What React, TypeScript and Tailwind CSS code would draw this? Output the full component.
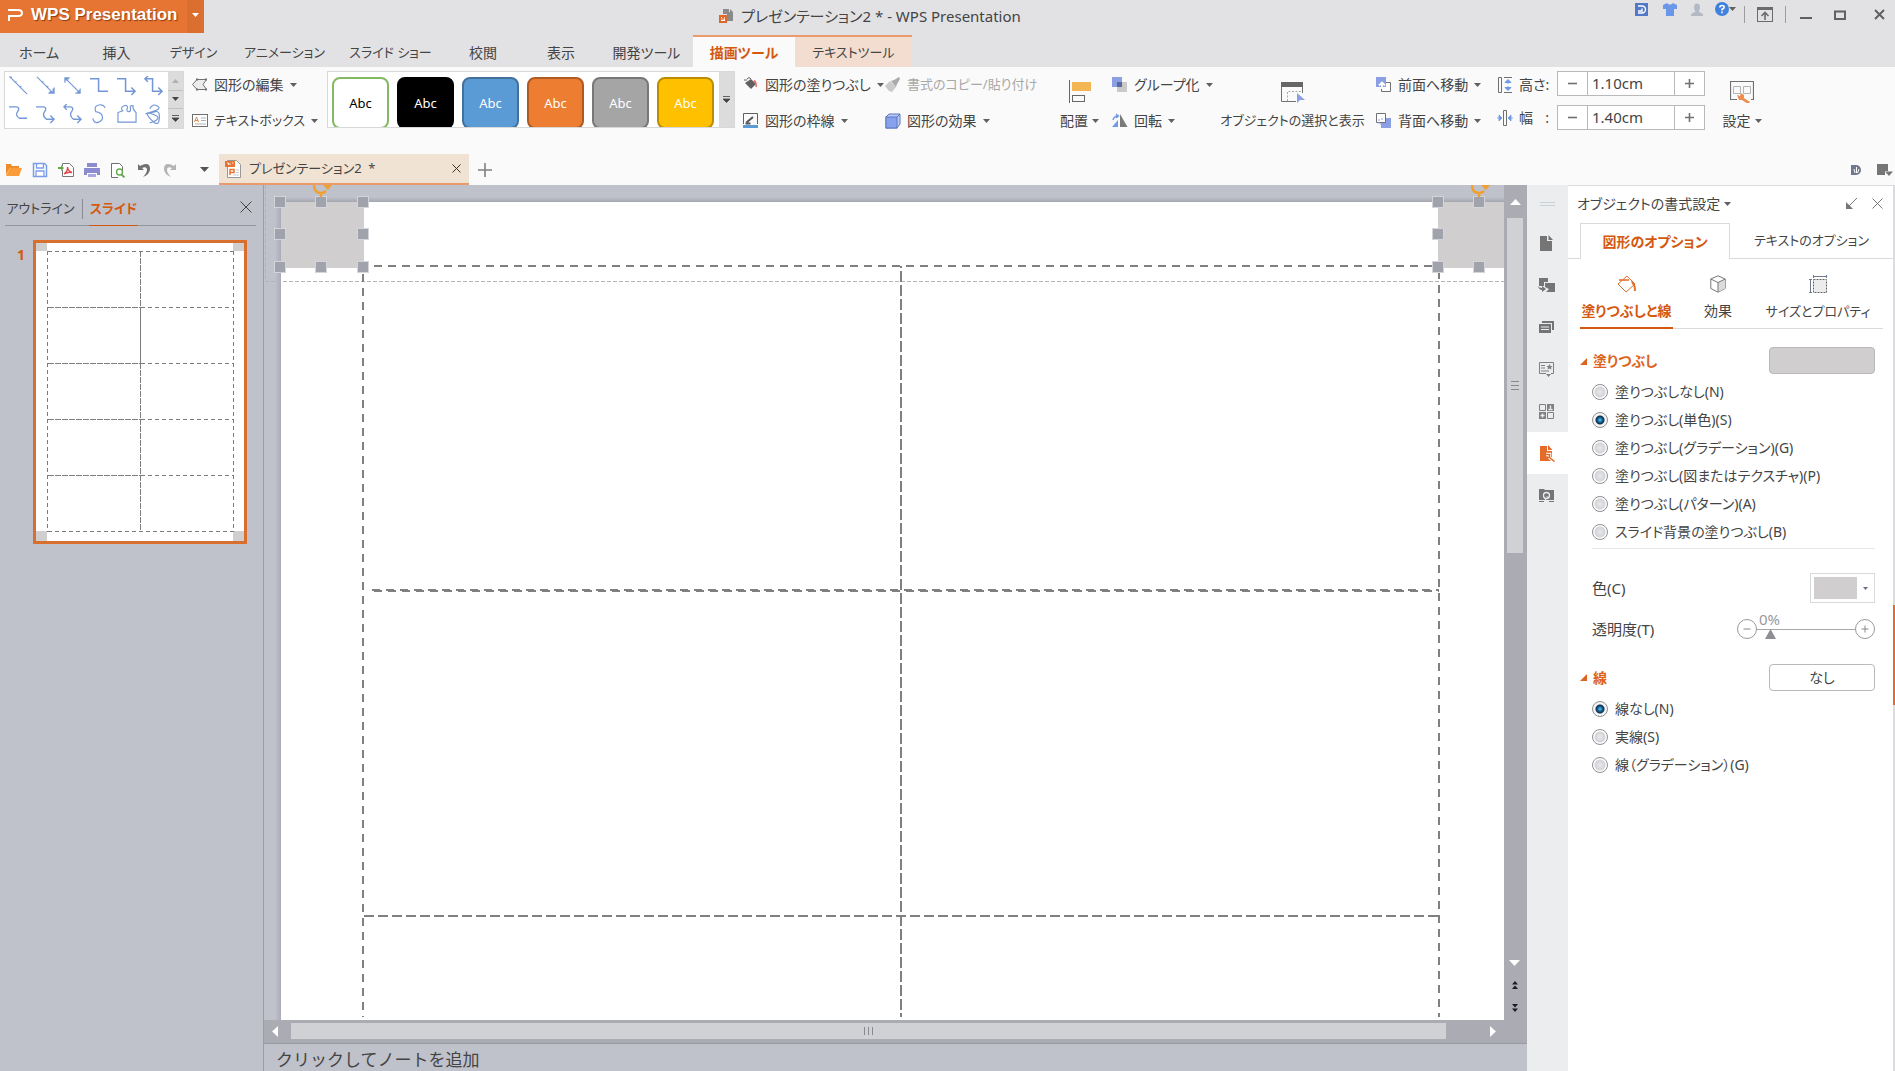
import type { ReactNode } from "react";

const menuTabs = [
  { label: "ホーム", style: "w-[78px] text-sm" },
  { label: "挿入", style: "w-[77px] text-sm" },
  { label: "デザイン", style: "w-[77px] text-[13px]" },
  { label: "アニメーション", style: "w-[105px] text-[13px]" },
  { label: "スライド ショー", style: "w-[107px] text-[13px]" },
  { label: "校閲", style: "w-[78px] text-sm" },
  { label: "表示", style: "w-[78px] text-sm" },
  { label: "開発ツール", style: "w-[93px] text-sm" },
];

const shapeStyles = [
  "bg-white text-black border-[#82b961]",
  "bg-black text-white border-black",
  "bg-[#5b9bd5] text-white border-[#41719c]",
  "bg-[#ed7d31] text-white border-[#ae5a21]",
  "bg-[#a5a5a5] text-white border-[#787878]",
  "bg-[#ffc000] text-white border-[#bc8c00]",
];

const fillOptions = [
  "塗りつぶしなし(N)",
  "塗りつぶし(単色)(S)",
  "塗りつぶし(グラデーション)(G)",
  "塗りつぶし(図またはテクスチャ)(P)",
  "塗りつぶし(パターン)(A)",
  "スライド背景の塗りつぶし(B)",
];

const lineOptions = ["線なし(N)", "実線(S)", "線（グラデーション）(G)"];

const blue = "#7397d6";

function Svg({ w = 16, h = 16, children }: { w?: number; h?: number; children: ReactNode }) {
  return (
    <svg width={w} height={h} viewBox={`0 0 ${w} ${h}`} fill="none" className="shrink-0" aria-hidden="true">
      {children}
    </svg>
  );
}

function Caret({ color = "#606060" }: { color?: string }) {
  return (
    <Svg w={7} h={4}>
      <path d="M0 0h7L3.5 4z" fill={color} />
    </Svg>
  );
}

/* ---------- title bar ---------- */

function TitleBar() {
  return (
    <header className="flex h-[35px] items-start">
      <div className="flex h-[33px] w-[204px] shrink-0 text-white">
        <button className="flex flex-1 items-center gap-2 bg-[#e67433] pl-2 pb-1 font-['Liberation_Sans',sans-serif] text-[17px] font-bold whitespace-nowrap [text-shadow:1px_1px_1px_#8a3c10]">
          <Svg w={15} h={14}>
            <path d="M0 2h10q4 0 4 3t-4 3H1v5" stroke="#fff" strokeWidth="2" />
          </Svg>
          WPS Presentation
        </button>
        <button aria-label="メニュー" className="flex w-[17px] items-center justify-center bg-[#db6f30] pb-1">
          <Caret color="#fff" />
        </button>
      </div>
      <div className="flex flex-1 items-center justify-center gap-1.5 pt-1">
        <Svg w={16} h={16}>
          <path d="M4 1h6v3h4v9H8V6H4z" fill="#8a8a8a" />
          <path d="M11 1l3 3h-3z" fill="#8a8a8a" />
          <rect x="1" y="8" width="6" height="6" fill="#fff" stroke="#e0692a" strokeWidth="2" />
          <path d="M3 12V9.500h2v1.500H3" stroke="#e0692a" />
        </Svg>
        <h1 className="text-[15px] leading-6">プレゼンテーション2 * - WPS Presentation</h1>
      </div>
      <div className="flex w-[359px] shrink-0 items-start justify-end pr-2.5">
        <div className="flex items-center pt-0.5">
          <button aria-label="Docer" className="mr-[15px]">
            <Svg w={13} h={13}>
              <rect width="13" height="13" fill="#5279c7" />
              <path d="M3 3h4a3.500 3.500 0 010 7H3M3 8h4V5.500" stroke="#fff" strokeWidth="1.4" />
            </Svg>
          </button>
          <button aria-label="スキン" className="mr-3.5">
            <Svg w={14} h={13}>
              <path d="M0 2l4-2q3 3 6 0l4 2v4h-3v7H3V6H0z" fill="#6b97e8" />
            </Svg>
          </button>
          <button aria-label="アカウント" className="mr-3">
            <Svg w={12} h={13}>
              <path d="M3 4a3 3.500 0 016 0q0 3-1.500 4.500L12 11v2H0v-2l4.500-2.500Q3 7 3 4z" fill="#b4bac4" />
            </Svg>
          </button>
          <button aria-label="ヘルプ" className="flex items-center">
            <Svg w={14} h={14}>
              <circle cx="7" cy="7" r="7" fill="#3f81dc" />
              <path d="M4.800 5.500q0-2 2.200-2t2.200 1.700Q9.200 6.500 7 7.300V8.500M7 9.500v1.700" stroke="#fff" strokeWidth="1.6" />
            </Svg>
            <Caret />
          </button>
        </div>
        <div className="ml-2 flex items-center pt-1.5">
          <span className="h-[17px] w-px bg-[#9c9c9e]" />
          <button aria-label="リボンの表示" className="mx-3">
            <Svg w={16} h={15}>
              <rect x=".5" y=".5" width="15" height="14" stroke="#6b6b6b" />
              <path d="M0 0h16v3H0z" fill="#6b6b6b" />
              <path d="M8 13V6M4.500 9L8 5.500 11.500 9" stroke="#6b6b6b" strokeWidth="1.6" />
            </Svg>
          </button>
          <span className="h-[17px] w-px bg-[#9c9c9e]" />
          <button aria-label="最小化" className="mr-[22px] ml-3.5">
            <Svg w={12} h={12}>
              <path d="M0 9h12" stroke="#606060" strokeWidth="2" />
            </Svg>
          </button>
          <button aria-label="最大化" className="mr-7">
            <Svg w={12} h={10}>
              <rect x="1" y="1.500" width="10" height="7.500" stroke="#606060" strokeWidth="2" />
            </Svg>
          </button>
          <button aria-label="閉じる">
            <Svg w={11} h={11}>
              <path d="M1 1l9 9M10 1l-9 9" stroke="#606060" strokeWidth="2" />
            </Svg>
          </button>
        </div>
      </div>
    </header>
  );
}

function MenuTabs() {
  return (
    <nav className="flex h-8">
      {menuTabs.map((t) => (
        <button key={t.label} className={`${t.style} shrink-0 pt-1 whitespace-nowrap`}>
          {t.label}
        </button>
      ))}
      <button className="w-[102px] shrink-0 border-t-2 border-[#e99b6c] bg-[#fafafa] pt-0.5 text-sm font-bold whitespace-nowrap text-[#d4590f]">
        描画ツール
      </button>
      <button className="w-[117px] shrink-0 border-t-2 border-[#e99b6c] bg-[#f3ddd0] pt-0.5 text-[13px] whitespace-nowrap">
        テキストツール
      </button>
    </nav>
  );
}

/* ---------- ribbon ---------- */

type CmdProps = { icon: ReactNode; label: string; caret?: boolean; muted?: boolean; small?: boolean };

function Cmd({ icon, label, caret = true, muted = false, small = false }: CmdProps) {
  return (
    <button
      className={`flex h-9 items-center gap-1.5 whitespace-nowrap ${small ? "text-[13px]" : "text-sm"} ${muted ? "text-[#a8a8a8]" : ""}`}
    >
      {icon}
      <span>{label}</span>
      {caret && <Caret />}
    </button>
  );
}

function BigCmd({ icon, label, caret = true, small = false }: CmdProps) {
  return (
    <button className={`flex h-[72px] w-full flex-col items-center whitespace-nowrap ${small ? "text-[13px]" : "text-sm"}`}>
      <span className="flex h-9 items-end">{icon}</span>
      <span className="flex h-9 items-center gap-1">
        {label}
        {caret && <Caret />}
      </span>
    </button>
  );
}

const shapes: ReactNode[] = [
  <path d="M1 1l18 18M0 1h3M6 6h2M11 11h2" />,
  <path d="M1 1l17 17M6 6h2M11 11h2M13 18h6v-6M14 17h4v-4" />,
  <path d="M2 2l16 16M7 2H2v5M3 5V3h3M18 13v5h-5M15 17h2v-2" />,
  <path d="M0 3h9v13h10" strokeWidth="1.6" />,
  <path d="M0 3h9v13h9M15 12l4 4-4 4" strokeWidth="1.6" />,
  <path d="M1 3h8v13h9M15 12l4 4-4 4M4 0L1 3l3 3" strokeWidth="1.600" />,
  <path d="M0 3h8q4 1 1 5t2 7h8" strokeWidth="1.4" />,
  <path d="M0 3h8q4 1 1 5t2 8h7M15 12l4 4-4 4" strokeWidth="1.4" />,
  <path d="M1 3h7q4 1 1 5t2 8h7M15 12l4 4-4 4M4 0L1 3l3 3" strokeWidth="1.4" />,
  <path d="M16 4Q14 0 9 1T6 8q6 1 7 5t-4 6T3 15" />,
  <path d="M1 19V9l5-2Q3 4 7 2t4 2q-2 4 2 4 2-1 1-4t3-2q-1 3 3 7v10z" />,
  <path d="M6 5q3-6 8-3t-5 6-6 2 9-2 4 8-9 0 3-5-4 9" />,
];

function MoreGlyph() {
  return (
    <Svg w={7} h={7}>
      <path d="M0 .5h7M0 3h7L3.500 6.500z" fill="#444" stroke="#444" strokeWidth=".8" />
    </Svg>
  );
}

function ShapeGallery() {
  return (
    <div className="mt-1 flex h-[58px] w-[180px] shrink-0 border border-[#d8d8d8] bg-white">
      <div className="grid flex-1 grid-cols-6 grid-rows-2 place-items-center">
        {shapes.map((s, i) => (
          <button key={i} aria-label={`図形 ${i + 1}`}>
            <svg width="20" height="20" viewBox="0 0 21 21" fill="none" stroke={blue} strokeWidth="1.2">
              {s}
            </svg>
          </button>
        ))}
      </div>
      <div className="grid w-[15px] grid-rows-3 divide-y divide-[#c2c2c2] bg-[#dcdcdc]">
        <button aria-label="上へ" className="flex items-center justify-center">
          <Svg w={7} h={4}>
            <path d="M0 4h7L3.500 0z" fill="#b0b0b0" />
          </Svg>
        </button>
        <button aria-label="下へ" className="flex items-center justify-center">
          <Caret color="#444" />
        </button>
        <button aria-label="その他" className="flex items-center justify-center">
          <MoreGlyph />
        </button>
      </div>
    </div>
  );
}

function StyleGallery() {
  return (
    <div className="mt-1 flex h-[57px] w-[408px] shrink-0 border border-[#d8d8d8] bg-white">
      <div className="flex flex-1 gap-2 overflow-hidden pt-[5px] pl-1">
        {shapeStyles.map((s) => (
          <button
            key={s}
            className={`${s} h-[52px] w-[57px] shrink-0 rounded-lg border-2 pt-0.5 font-['Noto_Sans',sans-serif] text-[13px]`}
          >
            Abc
          </button>
        ))}
      </div>
      <button aria-label="その他" className="flex w-[15px] items-center justify-center bg-[#dcdcdc]">
        <MoreGlyph />
      </button>
    </div>
  );
}

function SizeField({ id, value }: { id: string; value: string }) {
  return (
    <div className="flex h-[25px] border border-[#b9b9b9] bg-white">
      <button aria-label="減らす" className="flex w-[29px] items-center justify-center">
        <Svg w={9} h={9}>
          <path d="M0 4.500h9" stroke="#707070" strokeWidth="1.6" />
        </Svg>
      </button>
      <input
        id={id}
        defaultValue={value}
        className="w-0 flex-1 border-x border-[#b9b9b9] pl-1 text-[15px] text-[#444] outline-none"
      />
      <button aria-label="増やす" className="flex w-[29px] items-center justify-center">
        <Svg w={9} h={9}>
          <path d="M0 4.500h9M4.500 0v9" stroke="#707070" strokeWidth="1.6" />
        </Svg>
      </button>
    </div>
  );
}

function Ribbon() {
  return (
    <div className="flex h-[87px] bg-[#fafafa] pl-1">
      <ShapeGallery />
      <div className="ml-2 w-[135px] shrink-0">
        <Cmd
          label="図形の編集"
          icon={
            <Svg>
              <path d="M.5 7.500L5 2.500h9.500l-3.500 5 3.500 5H5z" fill="#ececec" stroke="#707070" />
              <path d="M4 1.500h2v2H4zM13 1.500h2v2h-2zM13 11.500h2v2h-2zM4 11.500h2v2H4z" fill="#707070" />
            </Svg>
          }
        />
        <Cmd
          small
          label="テキストボックス"
          icon={
            <Svg>
              <rect x=".5" y="1.500" width="15" height="12" fill="#fff" stroke="#707070" />
              <path d="M2.500 9L4.500 4l2 5M3 7.500h3" stroke="#e08a50" />
              <path d="M9 5h5M9 7.500h5M3 11h11" stroke="#b0b0b0" />
            </Svg>
          }
        />
      </div>
      <StyleGallery />
      <div className="ml-2 w-[142px] shrink-0">
        <Cmd
          label="図形の塗りつぶし"
          icon={
            <Svg>
              <path d="M2 6l6-4 5 5-5 5z" fill="#606060" />
              <path d="M4 2q2-3 4 0M1 3h3" stroke="#606060" />
              <path d="M11 3q3 0 3 7h-1.500q0-5-2-5z" fill="#e86b6b" />
            </Svg>
          }
        />
        <Cmd
          label="図形の枠線"
          icon={
            <Svg>
              <path d="M.5 11V.5h14V11" stroke="#606060" />
              <path d="M3.500 9.500L10 4M2.500 10.500h5" stroke="#555" strokeWidth="2" />
              <path d="M0 12h15v3H0z" fill="#5b9bd5" />
            </Svg>
          }
        />
      </div>
      <div className="w-[169px] shrink-0">
        <Cmd
          muted
          small
          caret={false}
          label="書式のコピー/貼り付け"
          icon={
            <Svg>
              <path d="M0 9l5-5 6 6-4 5-3-1z" fill="#cacaca" />
              <path d="M6 4l3-1 5-3 1 2-3 5-1 3z" fill="#aaa" />
            </Svg>
          }
        />
        <Cmd
          label="図形の効果"
          icon={
            <Svg>
              <path d="M1 4l3-3h11v10l-3 4H1z" fill="#b9cbf6" stroke="#5b76bd" />
              <rect x="1" y="4" width="11" height="11" fill="#86a2ec" stroke="#5b76bd" />
              <path d="M12 4l3-3" stroke="#5b76bd" />
            </Svg>
          }
        />
      </div>
      <div className="w-[51px] shrink-0">
        <BigCmd
          label="配置"
          icon={
            <Svg w={22} h={24}>
              <path d="M.5 1v23" stroke="#666" />
              <path d="M3 3h19v9H3z" fill="#f3b653" />
              <rect x="3.500" y="16.500" width="12" height="6" stroke="#666" />
            </Svg>
          }
        />
      </div>
      <div className="ml-[7px] w-[104px] shrink-0">
        <Cmd
          label="グループ化"
          icon={
            <Svg>
              <path d="M0 0h10v10H0z" fill="#8a9fe4" />
              <path d="M5 5h10v10H5z" fill="#cacaca" />
              <path d="M5 5h5v5H5z" fill="#5c6b9d" />
            </Svg>
          }
        />
        <Cmd
          label="回転"
          icon={
            <Svg>
              <path d="M8 1v13h7.500z" fill="#7a7a7a" />
              <path d="M0 14l6-7v7z" fill="#6f9be6" />
              <path d="M1 7q1-4 5-4M4 1l2.500 2L4 5" stroke="#6f9be6" strokeWidth="1.400" />
            </Svg>
          }
        />
      </div>
      <div className="w-[153px] shrink-0">
        <BigCmd
          small
          caret={false}
          label="オブジェクトの選択と表示"
          icon={
            <Svg w={24} h={24}>
              <path d="M15 22.500H.5V5h21v9" stroke="#707070" />
              <path d="M0 3h22v5H0z" fill="#666" />
              <path d="M6.500 22V12.500H20" stroke="#aaa" strokeDasharray="2 1.500" />
              <path d="M16 14v10l3-3h5z" fill="#8a9fe4" />
            </Svg>
          }
        />
      </div>
      <div className="ml-[7px] w-[118px] shrink-0">
        <Cmd
          label="前面へ移動"
          icon={
            <Svg>
              <path d="M5.500 5.500h9v9h-9z" fill="#fff" stroke="#707070" />
              <path d="M0 0h10v10H0z" fill="#8a9fe4" />
              <path d="M6 12V7M3 8.500L6 5.500l3 3" stroke="#fff" strokeWidth="1.800" />
            </Svg>
          }
        />
        <Cmd
          label="背面へ移動"
          icon={
            <Svg>
              <path d="M5 5h10v10H5z" fill="#8a9fe4" />
              <path d="M.5.5h9v9h-9z" fill="#fff" stroke="#707070" />
              <path d="M3 6v5h4M5 6l2 0" stroke="#8a9fe4" strokeDasharray="2 1" />
            </Svg>
          }
        />
      </div>
      <div className="ml-[3px] flex w-[60px] shrink-0 flex-col text-sm whitespace-nowrap">
        <label htmlFor="h" className="flex h-9 items-center gap-1.5">
          <Svg>
            <path d="M1.500 .5h3v15h-3zM7 .5h8M7 15.500h8" stroke="#707070" />
            <path d="M11 2.500l3 3H8zM11 13.500l3-3H8zM11 5v2M11 9v2" fill="#6f9be6" stroke="#6f9be6" />
          </Svg>
          高さ:
        </label>
        <label htmlFor="w" className="flex h-[30px] items-center gap-1.5">
          <Svg>
            <path d="M6.500.5h3v15h-3z" stroke="#707070" />
            <path d="M5 8L2 5v6zM11 8l3-3v6zM0 8h3M13 8h3" fill="#6f9be6" stroke="#6f9be6" strokeWidth=".8" />
          </Svg>
          <span className="flex w-[30px] justify-between">
            <span>幅</span>
            <span>:</span>
          </span>
        </label>
      </div>
      <div className="mt-1 flex w-[148px] shrink-0 flex-col gap-[9px]">
        <SizeField id="h" value="1.10cm" />
        <SizeField id="w" value="1.40cm" />
      </div>
      <div className="ml-3 w-[50px] shrink-0">
        <BigCmd
          label="設定"
          icon={
            <Svg w={24} h={24}>
              <path d="M7 20.500H.5v-18h23v18H21" stroke="#707070" strokeWidth="1.2" />
              <path d="M3.500 7.500h7v7h-7zM13.500 7.500h7v7h-7z" stroke="#b4b4b4" />
              <path d="M7 16l3 1 1-3 3 2 0 3 6 4-2 2-6-4-3 0z" fill="#ee8d50" />
            </Svg>
          }
        />
      </div>
    </div>
  );
}

/* ---------- quick access + document tabs ---------- */

function DocBar() {
  return (
    <div className="flex h-[31px] items-center bg-[#fafafa]">
      <div className="flex w-[219px] shrink-0 items-center gap-2.5 pl-1.5">
        <button aria-label="開く">
          <Svg>
            <path d="M0 13V2h5l1 2h7v2H4z" fill="#ef8d2c" />
            <path d="M4 6h12l-3 8H0z" fill="#fa9c3a" />
          </Svg>
        </button>
        <button aria-label="保存">
          <Svg>
            <path d="M1.500 1.500h11l2 2v11h-13z" fill="#fff" stroke="#7c9eea" strokeWidth="1.500" />
            <path d="M4.500 1v5h7V1M4 14.500V9h8v5.500" stroke="#7c9eea" strokeWidth="1.300" />
          </Svg>
        </button>
        <button aria-label="PDF に出力">
          <Svg>
            <path d="M4.500 4V1.500h7l4 4v9h-11V8" fill="#fff" stroke="#777" />
            <path d="M6 12q4-3 3.500-7Q10 9 14 10.500q-4-1-8 1.500" stroke="#e04848" strokeWidth="1.400" />
            <path d="M0 5h3V3l3 3-3 3V7H0z" fill="#67a84e" />
          </Svg>
        </button>
        <button aria-label="印刷">
          <Svg>
            <path d="M3 1h10v4H3zM0 6h16v7h-3v-2H3v2H0z" fill="#8d8bd0" />
            <path d="M4 12h8v3H4z" fill="#aaa8e0" />
          </Svg>
        </button>
        <button aria-label="印刷プレビュー">
          <Svg>
            <path d="M8 15.500H1.500v-14h8l3 3v4" fill="#fff" stroke="#707070" />
            <circle cx="9.500" cy="10" r="3" stroke="#67a84e" strokeWidth="1.400" />
            <path d="M11.500 12.500l3 3" stroke="#67a84e" strokeWidth="1.800" />
          </Svg>
        </button>
        <button aria-label="元に戻す">
          <Svg>
            <path d="M2 2v6h6L6 6q5-2 5 2 0 3-4 7 7-3 7-8 0-7-8-4-2 1-2 1z" fill="#707070" />
          </Svg>
        </button>
        <button aria-label="やり直し">
          <Svg>
            <path d="M14 2v6H8l2-2q-5-2-5 2 0 3 4 7-7-3-7-8 0-7 8-4 2 1 2 1z" fill="#b4b4b4" />
          </Svg>
        </button>
        <button aria-label="カスタマイズ" className="ml-3">
          <Svg w={9} h={5}>
            <path d="M0 0h9L4.500 5z" fill="#555" />
          </Svg>
        </button>
      </div>
      <div className="flex h-[31px] w-[250px] shrink-0 items-center border-b-2 border-[#e99b6c] bg-[#f1e3d3] pr-2 pl-1.5">
        <Svg w={18} h={20}>
          <path d="M2.500 1.500h9l4 4v13h-13z" fill="#fff" stroke="#999" />
          <path d="M0 2h10v6H0z" fill="#e67433" />
          <path d="M2 4h1.500v2M5 4v2M7 4h1.500" stroke="#fff" strokeWidth=".8" />
          <path d="M4.500 10.500h4.500v3H5.500M5 10v6" stroke="#e67433" strokeWidth="1.500" />
          <path d="M11 11h3M11 13.500h3M8 16h6" stroke="#ccc" />
        </Svg>
        <span className="flex-1 pl-1.5 text-[13px]">プレゼンテーション2&nbsp; *</span>
        <button aria-label="タブを閉じる">
          <Svg w={9} h={9}>
            <path d="M.5.5l8 8M8.500.5l-8 8" stroke="#333" />
          </Svg>
        </button>
      </div>
      <button aria-label="新しいタブ" className="ml-[9px]">
        <Svg w={14} h={14}>
          <path d="M7 0v14M0 7h14" stroke="#808080" strokeWidth="1.600" />
        </Svg>
      </button>
      <div className="ml-auto flex items-center gap-4 pr-0.5">
        <Svg w={10} h={10}>
          <path d="M0 0h5a5 5 0 010 10H0z" fill="#70778f" />
          <path d="M3 4l1 4M5.500 2v6M8 4L6.500 8" stroke="#fff" />
        </Svg>
        <Svg w={16} h={13}>
          <path d="M0 1h11v7H8v4H0z" fill="#757575" />
          <path d="M8 8.500h8L12 13z" fill="#757575" />
        </Svg>
      </div>
    </div>
  );
}

/* ---------- slide list ---------- */

function SlidePanel() {
  const rows = [64.5, 120.5, 176.5, 232.5];
  return (
    <aside className="w-[264px] shrink-0 border-r border-[#9b9ca6]">
      <div className="mr-[7px] ml-[5px] flex h-[41px] items-end border-b border-[#93959f] text-[13px]">
        <button className="h-[33px] w-[77px] pr-1.5 whitespace-nowrap">アウトライン</button>
        <span className="mb-[6px] h-5 w-px bg-[#888a94]" />
        <button className="-mb-px ml-1.5 h-[34px] w-[49px] border-b border-[#d4590f] font-bold whitespace-nowrap text-[#d4590f]">
          スライド
        </button>
        <button aria-label="パネルを閉じる" className="mr-1 mb-3 ml-auto">
          <Svg w={12} h={12}>
            <path d="M.5.5l11 11M11.500.5l-11 11" stroke="#444" />
          </Svg>
        </button>
      </div>
      <div className="mt-3.5 flex">
        <span className="w-[33px] pt-[5px] pr-2 text-right text-sm font-bold text-[#d4590f]">1</span>
        <button aria-label="スライド 1" className="border-3 border-[#d96f2e] bg-white">
          <svg width="208" height="298" viewBox="0 0 208 298" fill="none" stroke="#7c7c7c">
            <path d="M0 0h11v8H0zM197 0h11v8h-11zM0 288h11v10H0zM197 288h11v10h-11z" fill="#d0cecf" stroke="none" />
            <path d="M11.5 8v281M197.500 8v281M12 8.500h186M12 288.500h186" strokeDasharray="4 3" />
            <path d="M104.500 8v56M104.500 120v168" strokeDasharray="6 1" />
            <path d="M104.500 64v56" />
            {rows.map((y) => (
              <g key={y}>
                <path d={`M12 ${y}h93`} strokeDasharray="6 1" />
                <path d={`M105 ${y}h93`} strokeDasharray="4 3" />
              </g>
            ))}
          </svg>
        </button>
      </div>
    </aside>
  );
}

/* ---------- slide canvas ---------- */

function Handle({ x, y }: { x: number; y: number }) {
  return <rect x={x - 5.5} y={y - 5.5} width="11" height="11" fill="#a0a2ac" stroke="#d4d5da" />;
}

function RotateHandle({ x }: { x: number }) {
  return (
    <g>
      <path d={`M${x - 7} 0q0 8 7 8 3 0 5-2M${x} 8v4`} stroke="#f0a030" strokeWidth="2.500" />
      <path d={`M${x + 2} 0h9l-4 5z`} fill="#f0a030" />
    </g>
  );
}

function Canvas() {
  const handleRows = [17, 49, 82];
  return (
    <div className="min-h-0 flex-1 overflow-hidden">
      <svg width="100%" height="100%" fill="none">
        <defs>
          <linearGradient id="edgeTop" x1="0" y1="0" x2="0" y2="1">
            <stop offset="0" stopColor="#bfc1cb" />
            <stop offset="1" stopColor="#a5a7b0" />
          </linearGradient>
          <linearGradient id="edgeLeft" x1="0" y1="0" x2="1" y2="0">
            <stop offset="0" stopColor="#bfc1cb" />
            <stop offset="1" stopColor="#a9abb8" />
          </linearGradient>
        </defs>
        <rect x="12" y="12" width="100%" height="5" fill="url(#edgeTop)" />
        <rect x="11" y="17" width="6" height="100%" fill="url(#edgeLeft)" />
        <rect x="17" y="17" width="100%" height="100%" fill="#fff" />
        <rect x="17" y="17" width="83" height="66" fill="#d0cecf" />
        <rect x="1174" y="17" width="100%" height="66" fill="#d0cecf" />
        <path d="M1.500 0v96.500H1240" stroke="#b2b3ba" strokeDasharray="4 2" />
        <g stroke="#808080" strokeWidth="2">
          <path d="M99 89v743M1175 86v746M110 81h1066" strokeDasharray="8 6" />
          <path d="M637 81v751" strokeDasharray="11 3" strokeDashoffset="-5" />
          <path d="M108 405h1067M110 406h1065" strokeDasharray="8 6" />
          <path d="M100 731h1075" strokeDasharray="10 4" />
        </g>
        {handleRows.map((y) => (
          <g key={y}>
            <Handle x={16} y={y} />
            <Handle x={99} y={y} />
            <Handle x={1174} y={y} />
            {y !== 49 && <Handle x={57} y={y} />}
            {y !== 49 && <Handle x={1215} y={y} />}
          </g>
        ))}
        <RotateHandle x={57} />
        <RotateHandle x={1215} />
      </svg>
    </div>
  );
}

function Editor() {
  return (
    <main className="flex min-w-0 flex-1 flex-col">
      <div className="flex min-h-0 flex-1">
        <div className="flex min-w-0 flex-1 flex-col">
          <Canvas />
        </div>
        <div className="flex w-[23px] shrink-0 flex-col items-center bg-[#ababb4]">
          <button aria-label="上へスクロール" className="flex h-[33px] items-center">
            <Svg w={11} h={6}>
              <path d="M0 6h11L5.500 0z" fill="#fff" />
            </Svg>
          </button>
          <div className="mr-px flex h-[335px] w-4 items-center justify-center bg-[#d0d1d4]">
            <Svg w={8} h={9}>
              <path d="M0 .5h8M0 4.500h8M0 8.500h8" stroke="#88898f" />
            </Svg>
          </div>
          <div className="mt-auto flex flex-col items-center gap-[15px] pr-0.5 pb-2">
            <button aria-label="下へスクロール">
              <Svg w={11} h={6}>
                <path d="M0 0h11L5.500 6z" fill="#fff" />
              </Svg>
            </button>
            <button aria-label="前のスライド">
              <Svg w={6} h={8}>
                <path d="M0 3.500h6L3 0zM0 8h6L3 4.500z" fill="#1c1c1c" />
              </Svg>
            </button>
            <button aria-label="次のスライド">
              <Svg w={6} h={8}>
                <path d="M0 0h6L3 3.500zM0 4.500h6L3 8z" fill="#1c1c1c" />
              </Svg>
            </button>
          </div>
        </div>
      </div>
      <div className="flex h-[23px] items-start bg-[#ababb4] pt-[3px]">
        <button aria-label="左へスクロール" className="flex h-4 w-[27px] items-center pl-2">
          <Svg w={6} h={11}>
            <path d="M6 0v11L0 5.500z" fill="#fff" />
          </Svg>
        </button>
        <div className="flex h-4 flex-1 items-center justify-center bg-[#d0d1d4]">
          <Svg w={9} h={8}>
            <path d="M.5 0v8M4.500 0v8M8.500 0v8" stroke="#88898f" />
          </Svg>
        </div>
        <button aria-label="右へスクロール" className="flex h-4 w-[81px] items-center pl-11">
          <Svg w={6} h={11}>
            <path d="M0 0v11l6-5.500z" fill="#fff" />
          </Svg>
        </button>
      </div>
      <div className="border-t border-[#9a9aa5] pt-1.5 pb-px pl-3 text-[17px] leading-5 [font-feature-settings:normal]">
        クリックしてノートを追加
      </div>
    </main>
  );
}

/* ---------- right side ---------- */

const sideIcons: { label: string; icon: ReactNode }[] = [
  {
    label: "新規",
    icon: <path d="M2 1h7v5h5v10H2zM10.500 0L15 5h-4.500z" fill="#757575" />,
  },
  {
    label: "画面切り替え",
    icon: (
      <>
        <path d="M1 1h9v4H6v4H1zM7 6h10v9H8l3-3-4-2z" fill="#757575" />
        <path d="M0 9q1 2 4 2V9l4 3-4 3v-2Q1 13 0 9z" fill="#757575" />
      </>
    ),
  },
  {
    label: "スライド",
    icon: (
      <>
        <path d="M4 2h12v9h-2V4H4z" fill="#757575" />
        <path d="M1 5h12v9H1z" fill="#757575" />
        <path d="M3 8h8M3 10.500h8" stroke="#ecedef" />
      </>
    ),
  },
  {
    label: "アニメーション",
    icon: (
      <>
        <path d="M8 12.500H1.500v-11h14v11H13" stroke="#808080" />
        <path d="M3 4.500h4M3 7h4M3 10h8" stroke="#808080" />
        <path d="M11.500 3l1 2h2l-1.500 1.500.5 2-2-1-2 1 .5-2L8.500 5h2zM8 13h5l-2.500 3z" fill="#808080" />
      </>
    ),
  },
  {
    label: "レイアウト",
    icon: (
      <>
        <path d="M1.500 1.500h6v6h-6zM9.500 9.500h6v6h-6z" stroke="#808080" />
        <path d="M9 1h7v7H9zM1 9h7v7H1z" fill="#808080" />
        <path d="M12.500 2.500v3M10.500 6.500h4M4.500 10.500v4M2.500 12.500h4" stroke="#ecedef" strokeWidth="1.400" />
      </>
    ),
  },
  {
    label: "書式設定",
    icon: (
      <>
        <path d="M2 1h7v5h5v10H2zM10 0l4.500 5H10z" fill="#e56c28" />
        <path d="M8 9.500h3.500v3l5 4" stroke="#fff" strokeWidth="3.500" />
        <path d="M8 9.500h3.500v3H9M11.500 12.500l5 4" stroke="#e56c28" strokeWidth="1.600" />
      </>
    ),
  },
  {
    label: "クラウド",
    icon: (
      <>
        <path d="M1 2h5l1 1h9v10H1zM1 14h5v1H1zM11 14h5v1h-5z" fill="#757575" />
        <circle cx="8.500" cy="8.500" r="3" stroke="#ecedef" strokeWidth="1.300" />
        <path d="M6.500 11.500l2 2M8.500 9l2 2" stroke="#ecedef" />
      </>
    ),
  },
];

function SideBar() {
  return (
    <nav className="flex w-[41px] shrink-0 flex-col bg-[#ecedef]">
      <div className="flex h-[37px] items-center justify-center">
        <Svg w={15} h={4}>
          <path d="M0 .5h15M0 3.500h15" stroke="#ccd0d8" />
        </Svg>
      </div>
      {sideIcons.map((s) => (
        <button
          key={s.label}
          aria-label={s.label}
          className={`flex h-[42px] items-center justify-center pr-0.5 ${s.label === "書式設定" ? "bg-white" : ""}`}
        >
          <Svg w={17} h={17}>{s.icon}</Svg>
        </button>
      ))}
    </nav>
  );
}

function RadioList({ name, options, checked }: { name: string; options: string[]; checked: number }) {
  return (
    <div className="pl-3">
      {options.map((o, i) => (
        <label key={o} className="flex h-7 items-center gap-[7px] text-sm whitespace-nowrap">
          <input
            type="radio"
            name={name}
            defaultChecked={i === checked}
            className="size-4 shrink-0 appearance-none rounded-full border border-[#8e8f8f] bg-[radial-gradient(circle_at_center,#e8e9eb_0,#d2d4d9_5px,#fff_6px)] checked:bg-[radial-gradient(circle_at_center,#5fd0f5_0,#1a6fa5_2px,#0f2c4c_4px,#f4f4f4_5px)]"
          />
          {o}
        </label>
      ))}
    </div>
  );
}

function SectionTitle({ children }: { children: ReactNode }) {
  return (
    <h2 className="flex items-center gap-1.5 text-sm font-bold text-[#dd6420]">
      <Svg w={7} h={7}>
        <path d="M7 0v7H0z" fill="#dd6420" />
      </Svg>
      {children}
    </h2>
  );
}

function FormatPanel() {
  return (
    <aside className="w-[325px] shrink-0 border-t border-[#dcdcde] bg-white">
      <div className="flex h-[37px] items-center pr-2.5 pb-0.5 pl-[9px]">
        <button className="flex items-center gap-1 text-sm">
          オブジェクトの書式設定
          <Caret />
        </button>
        <button aria-label="縮小" className="mr-[15px] ml-auto">
          <Svg w={11} h={11}>
            <path d="M11 0L2 9" stroke="#777" />
            <path d="M0 4v7h7z" fill="#777" />
          </Svg>
        </button>
        <button aria-label="閉じる">
          <Svg w={11} h={11}>
            <path d="M.5.5l10 10M10.500.5l-10 10" stroke="#777" />
          </Svg>
        </button>
      </div>
      <div className="flex h-9">
        <span className="w-3 border-b border-[#d9dadc]" />
        <button className="w-[150px] border border-b-0 border-[#d9dadc] text-sm font-bold whitespace-nowrap text-[#d4590f]">
          図形のオプション
        </button>
        <button className="flex-1 border-b border-[#d9dadc] text-[13px] whitespace-nowrap">テキストのオプション</button>
      </div>
      <div className="mr-2.5 ml-3 flex h-[70px] border-b border-[#d9dadc] whitespace-nowrap">
        <button className="-mb-px flex w-[93px] shrink-0 flex-col items-center border-b-2 border-[#d4590f] pt-4 text-sm font-bold text-[#d4590f]">
          <Svg w={20} h={18}>
            <path d="M1 9l9-8 8 8-9 8z" fill="#fff" stroke="#e07030" />
            <path d="M2 5h10" stroke="#e07030" strokeWidth="1.600" />
            <path d="M14 6q5 1 5 10h-2q0-6-2-7z" fill="#e07030" />
          </Svg>
          <span className="mt-2 leading-5">塗りつぶしと線</span>
        </button>
        <button className="flex w-[90px] shrink-0 flex-col items-center pt-4 text-sm">
          <Svg w={16} h={18}>
            <path d="M8 .8l7.200 3.200v9.500L8 17.200.8 13.500V4z" fill="#fff" stroke="#777" />
            <path d="M8 7.500l7-3.500v9.500L8 17z" fill="#dcdcdc" />
            <path d="M.8 4L8 7.500 15.200 4M8 7.500V17" stroke="#777" />
          </Svg>
          <span className="mt-2 leading-5">効果</span>
        </button>
        <button className="flex flex-1 flex-col items-center pt-4 pr-2.5 text-[13px]">
          <Svg w={18} h={18}>
            <rect x="4.500" y="4.500" width="13" height="13" fill="#ececec" stroke="#666" strokeDasharray="2 1" />
            <path d="M4 1.500h14M4.500 0v3M17.500 0v3M1.500 4v14M0 4.500h3M0 17.500h3" stroke="#707a8e" />
          </Svg>
          <span className="mt-2 leading-5">サイズとプロパティ</span>
        </button>
      </div>

      <div className="pr-[18px] pl-3">
        <div className="flex h-[49px] items-end justify-between">
          <div className="flex h-[34px] items-center">
            <SectionTitle>塗りつぶし</SectionTitle>
          </div>
          <button aria-label="塗りつぶしの色" className="mb-1 h-[27px] w-[106px] rounded-sm border border-[#b9b9b9] bg-[#d0cecf]" />
        </div>
        <RadioList name="fill" options={fillOptions} checked={1} />
        <div className="mt-0.5 ml-3 border-t border-[#e8e8ea]" />
        <div className="mt-[24px] flex h-[30px] items-center justify-between pl-3 text-[15px]">
          <span>色(C)</span>
          <button aria-label="色" className="flex h-[30px] w-[65px] items-center justify-between border border-[#d9dadc] pr-1.5 pl-[3px]">
            <span className="h-[22px] w-[43px] bg-[#d0cecf]" />
            <Svg w={5} h={3}>
              <path d="M0 0h5L2.500 3z" fill="#666e88" />
            </Svg>
          </button>
        </div>
        <div className="mt-3 flex h-7 items-center justify-between pl-3 text-[15px]">
          <label htmlFor="opacity">透明度(T)</label>
          <div className="relative flex items-center">
            <button aria-label="透明度を下げる">
              <Svg w={20} h={20}>
                <circle cx="10" cy="10" r="9.500" stroke="#999" />
                <path d="M6.500 10h7" stroke="#888" />
              </Svg>
            </button>
            <span className="absolute bottom-3 left-[22px] text-[15px] leading-4 text-[#999]">0%</span>
            <div className="flex h-5 w-[98px] items-center bg-[linear-gradient(#a8a8a8,#a8a8a8)] bg-[length:100%_1px] bg-center bg-no-repeat px-2">
              <input
                id="opacity"
                type="range"
                defaultValue={0}
                className="h-5 w-full appearance-none bg-transparent [&::-webkit-slider-thumb]:mt-2.5 [&::-webkit-slider-thumb]:h-2.5 [&::-webkit-slider-thumb]:w-[11px] [&::-webkit-slider-thumb]:appearance-none [&::-webkit-slider-thumb]:bg-[#8e8e93] [&::-webkit-slider-thumb]:[clip-path:polygon(50%_0,100%_100%,0_100%)]"
              />
            </div>
            <button aria-label="透明度を上げる">
              <Svg w={20} h={20}>
                <circle cx="10" cy="10" r="9.500" stroke="#999" />
                <path d="M6.500 10h7M10 6.500v7" stroke="#888" />
              </Svg>
            </button>
          </div>
        </div>
        <div className="mt-[21px] mb-1 flex h-[27px] items-center justify-between">
          <SectionTitle>線</SectionTitle>
          <button className="h-[27px] w-[106px] rounded-sm border border-[#b9b9b9] bg-white text-sm">なし</button>
        </div>
        <RadioList name="line" options={lineOptions} checked={0} />
      </div>
    </aside>
  );
}

export default function App() {
  return (
    <div className="flex h-screen flex-col overflow-hidden bg-[#e2e2e4] font-['Noto_Sans','Noto_Sans_CJK_JP',sans-serif] text-[#444] [font-feature-settings:'palt']">
      <TitleBar />
      <MenuTabs />
      <Ribbon />
      <DocBar />
      <div className="flex min-h-0 flex-1 bg-[#bfc1cb]">
        <SlidePanel />
        <Editor />
        <SideBar />
        <FormatPanel />
        <div className="w-0.5 shrink-0 bg-[#dcdcde] pt-[420px]">
          <div className="h-[100px] bg-[#e56c28]" />
        </div>
      </div>
    </div>
  );
}
